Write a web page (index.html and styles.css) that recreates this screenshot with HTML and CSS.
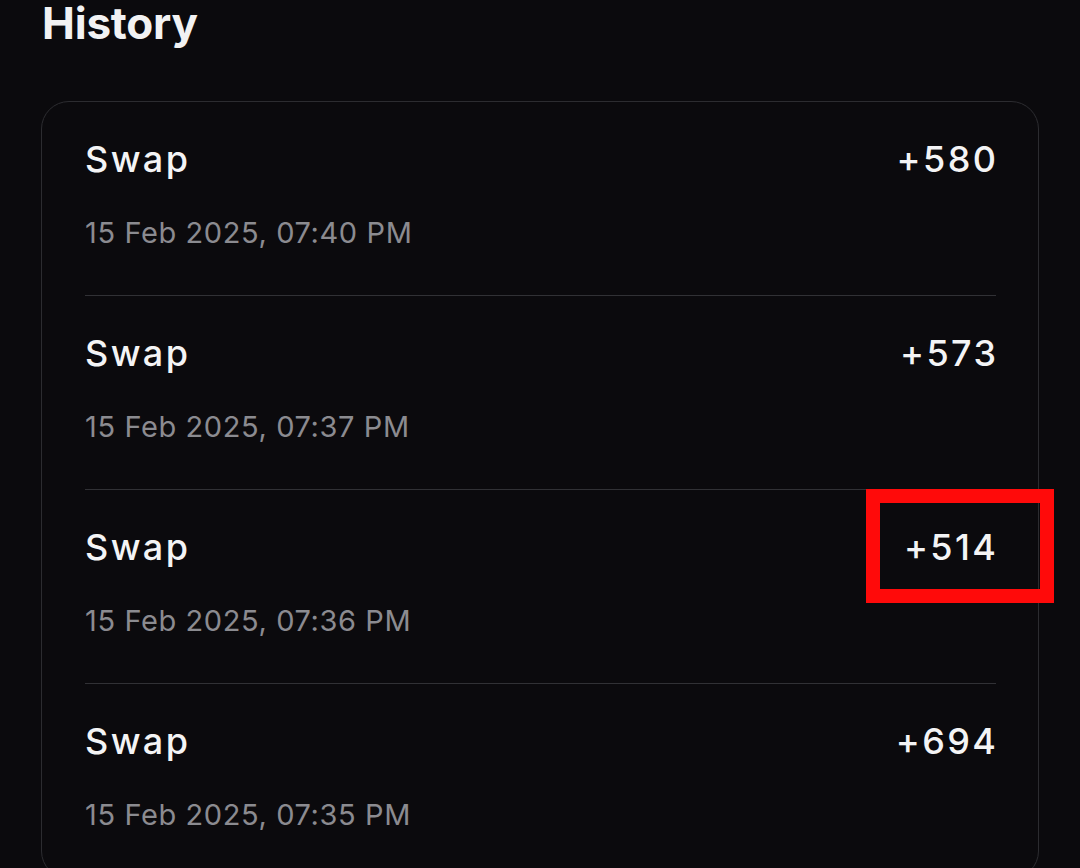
FILE: index.html
```html
<!DOCTYPE html>
<html lang="en">
<head>
<meta charset="utf-8">
<title>History</title>
<link rel="stylesheet" href="styles.css">
</head>
<body>
<main class="page">
  <h1 class="title">History</h1>
  <section class="card">
    <div class="row">
      <div class="line"><span class="kind">Swap</span><span class="amount">+580</span></div>
      <div class="date">15 Feb 2025, 07:40 PM</div>
    </div>
    <div class="row">
      <div class="line"><span class="kind">Swap</span><span class="amount">+573</span></div>
      <div class="date">15 Feb 2025, 07:37 PM</div>
    </div>
    <div class="row">
      <div class="line"><span class="kind">Swap</span><span class="amount">+514</span></div>
      <div class="date">15 Feb 2025, 07:36 PM</div>
    </div>
    <div class="row">
      <div class="line"><span class="kind">Swap</span><span class="amount">+694</span></div>
      <div class="date">15 Feb 2025, 07:35 PM</div>
    </div>
  </section>
  <div class="highlight"></div>
</main>
</body>
</html>
```

FILE: styles.css
```css
html, body {
  margin: 0;
  padding: 0;
  overflow: hidden;
  background: #0b0a0d;
}
body {
  font-family: Inter, "Noto Sans", sans-serif;
  color: #f4f4f5;
}
.page {
  position: relative;
  padding: 0 41px;
  height: 868px;
}
.title {
  margin: 0 0 55px 1px;
  font-size: 44px;
  line-height: 46px;
  font-weight: 700;
  letter-spacing: -0.2px;
  color: #f2f2f3;
}
.card {
  border: 1px solid #2c2c30;
  border-radius: 28px;
  padding: 0 42px 0 43px;
}
.row {
  padding: 37px 0 46px;
  border-bottom: 1px solid #313135;
}
.line {
  display: flex;
  justify-content: space-between;
  align-items: baseline;
  font-size: 36px;
  line-height: 40px;
  font-weight: 500;
  letter-spacing: 2.4px;
}
.amount {
  margin-right: -2.4px;
}
.date {
  margin-top: 38px;
  font-size: 29px;
  line-height: 32px;
  letter-spacing: 0.6px;
  color: #8b8b90;
}
.highlight {
  position: absolute;
  left: 866px;
  top: 489px;
  width: 160px;
  height: 86px;
  border: 14px solid #ff0a0a;
}
```
